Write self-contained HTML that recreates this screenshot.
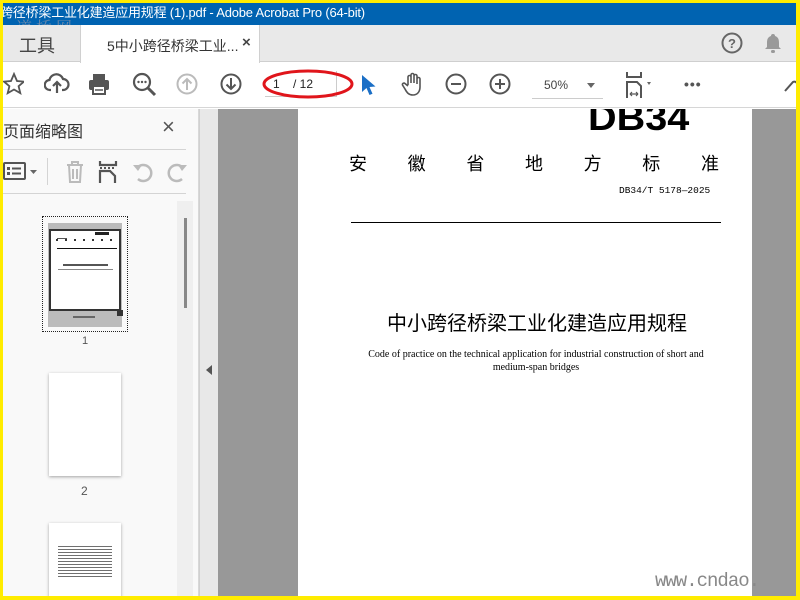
<!DOCTYPE html>
<html><head><meta charset="utf-8">
<style>
*{margin:0;padding:0;box-sizing:border-box}
body{width:800px;height:600px;overflow:hidden;background:#fff;position:relative;font-family:"Liberation Sans","Noto Sans CJK SC",sans-serif}
.a{position:absolute}
.ic{position:absolute}
</style></head><body>
<div class="a" style="left:0;top:0;width:800px;height:600px;background:#fff;overflow:hidden">
 <!-- title bar -->
 <div class="a" style="left:0;top:3px;width:800px;height:22px;background:#0063b1;color:#fff;font-size:13px;letter-spacing:-0.2px;line-height:19px;white-space:nowrap">跨径桥梁工业化建造应用规程 (1).pdf - Adobe Acrobat Pro (64-bit)</div>
 <div class="a" style="left:16px;top:15px;font-size:16px;color:#9a9aa8;letter-spacing:4px;opacity:.7;font-family:'Noto Serif CJK SC',serif">道桥网</div>
 <!-- tab bar -->
 <div class="a" style="left:0;top:25px;width:800px;height:37px;background:#e9e9e9;border-bottom:1px solid #cfcfcf"></div>
 <div class="a" style="left:80px;top:25px;width:180px;height:38px;background:#fff;border-left:1px solid #d0d0d0;border-right:1px solid #d0d0d0"></div>
 <div class="a" style="left:19px;top:32px;font-size:18px;color:#444">工具</div>
 <div class="a" style="left:107px;top:36px;font-size:14px;color:#333">5中小跨径桥梁工业...</div>
 <div class="a" style="left:242px;top:34px;font-size:15px;color:#444;font-weight:bold">×</div>
 <svg class="ic" style="left:721px;top:32px" width="22" height="22"><circle cx="11" cy="11" r="9.5" fill="none" stroke="#666" stroke-width="2"/><text x="11" y="16" font-size="13" font-weight="bold" text-anchor="middle" fill="#666" font-family="Liberation Sans">?</text></svg>
 <svg class="ic" style="left:764px;top:32px" width="18" height="22"><path d="M9 2a2 2 0 0 1 2 2c3 1 4 3 4 7v4l2 2H1l2-2v-4c0-4 1-6 4-7a2 2 0 0 1 2-2z" fill="#999"/><rect x="7" y="18" width="4" height="3" rx="1.5" fill="#999"/></svg>
 <!-- toolbar -->
 <div class="a" style="left:0;top:63px;width:800px;height:45px;background:#fff;border-bottom:1px solid #d6d6d6"></div>
 <svg class="ic" style="left:2px;top:72px" width="22" height="24"><path d="M12 2l3 7 7 .6-5.4 4.6 1.7 7L12 17.5 5.7 21.2l1.7-7L2 9.6 9 9z" fill="none" stroke="#555" stroke-width="1.8"/></svg>
 <svg class="ic" style="left:44px;top:73px" width="26" height="22"><path d="M7 17H6a5 5 0 0 1-.5-10A7 7 0 0 1 19 6a5 5 0 0 1 0 11h-1" fill="none" stroke="#555" stroke-width="2.2"/><path d="M13 20v-10M9 13l4-4 4 4" fill="none" stroke="#555" stroke-width="2.2"/></svg>
 <svg class="ic" style="left:87px;top:72px" width="24" height="24"><rect x="6" y="2" width="12" height="6" fill="#555"/><rect x="2" y="8" width="20" height="10" rx="2" fill="#555"/><rect x="6" y="14" width="12" height="8" fill="#fff" stroke="#555" stroke-width="2"/><line x1="8" y1="18" x2="16" y2="18" stroke="#555" stroke-width="1.5"/></svg>
 <svg class="ic" style="left:132px;top:72px" width="26" height="26"><circle cx="10" cy="10" r="8" fill="none" stroke="#555" stroke-width="2.2"/><path d="M16 16l7 7" stroke="#555" stroke-width="3"/><circle cx="6.5" cy="10" r="1.2" fill="#555"/><circle cx="10" cy="10" r="1.2" fill="#555"/><circle cx="13.5" cy="10" r="1.2" fill="#555"/></svg>
 <svg class="ic" style="left:176px;top:73px" width="22" height="22"><circle cx="11" cy="11" r="9.5" fill="none" stroke="#bbb" stroke-width="2"/><path d="M11 17V6M6.5 10.5L11 6l4.5 4.5" fill="none" stroke="#bbb" stroke-width="2"/></svg>
 <svg class="ic" style="left:220px;top:73px" width="22" height="22"><circle cx="11" cy="11" r="9.5" fill="none" stroke="#555" stroke-width="2"/><path d="M11 5v11M6.5 11.5L11 16l4.5-4.5" fill="none" stroke="#555" stroke-width="2"/></svg>
 <div class="a" style="left:265px;top:71px;width:72px;height:26px;border-right:1px solid #ccc;border-bottom:1px solid #ccc;font-size:12px;color:#222;line-height:26px;padding-left:8px">1 &nbsp;&nbsp;&nbsp;/ 12</div>
 <svg class="ic" style="left:260px;top:65px" width="100" height="38"><ellipse cx="48" cy="19" rx="44" ry="13" fill="none" stroke="#e0151b" stroke-width="3"/></svg>
 <svg class="ic" style="left:359px;top:73px" width="18" height="24"><path d="M3 2l0 17 4.5-4 3 7 3-1.3-3-6.7 6-.5z" fill="#1b6fc6"/></svg>
 <svg class="ic" style="left:401px;top:71px" width="24" height="26"><path d="M7 14V6a1.5 1.5 0 0 1 3 0v6V4a1.5 1.5 0 0 1 3 0v8V5a1.5 1.5 0 0 1 3 0v8V8a1.5 1.5 0 0 1 3 0v8c0 5-3 8-7 8s-6-2-8-6l-2.5-4a1.5 1.5 0 0 1 2.5-1.5L7 15" fill="none" stroke="#555" stroke-width="1.6"/></svg>
 <svg class="ic" style="left:445px;top:73px" width="22" height="22"><circle cx="11" cy="11" r="9.5" fill="none" stroke="#555" stroke-width="2"/><path d="M6 11h10" stroke="#555" stroke-width="2"/></svg>
 <svg class="ic" style="left:489px;top:73px" width="22" height="22"><circle cx="11" cy="11" r="9.5" fill="none" stroke="#555" stroke-width="2"/><path d="M6 11h10M11 6v10" stroke="#555" stroke-width="2"/></svg>
 <div class="a" style="left:532px;top:71px;width:71px;height:28px;border-bottom:1px solid #ccc;font-size:12px;color:#444;line-height:28px;padding-left:12px">50%</div>
 <div class="a" style="left:587px;top:83px;width:0;height:0;border-left:4px solid transparent;border-right:4px solid transparent;border-top:5px solid #666"></div>
 <svg class="ic" style="left:625px;top:71px" width="36" height="28"><path d="M2 1v5h14V1" fill="none" stroke="#555" stroke-width="2"/><path d="M2 27V11h10l4 4v12" fill="none" stroke="#555" stroke-width="2"/><path d="M5 23h8M5 23l2-2M5 23l2 2M13 23l-2-2M13 23l-2 2" stroke="#555" stroke-width="1.2" fill="none"/><path d="M22 11l4 0-2 3z" fill="#666"/></svg>
 <div class="a" style="left:684px;top:76px;font-size:14px;color:#555;letter-spacing:1px;font-weight:bold">•••</div>
 <svg class="ic" style="left:783px;top:75px" width="14" height="20"><path d="M2 16l8-9a3 3 0 0 1 4 4" fill="none" stroke="#555" stroke-width="2"/></svg>
 <!-- sidebar -->
 <div class="a" style="left:0;top:109px;width:199px;height:491px;background:#f9f9f9;border-right:1px solid #d8d8d8"></div>
 <div class="a" style="left:3px;top:118px;font-size:16px;color:#333">页面缩略图</div>
 <div class="a" style="left:162px;top:116px;font-size:22px;color:#555;line-height:22px">×</div>
 <div class="a" style="left:0;top:149px;width:186px;height:1px;background:#d4d4d4"></div>
 <svg class="ic" style="left:3px;top:160px" width="40" height="24"><rect x="1" y="3" width="21" height="16" rx="1" fill="none" stroke="#555" stroke-width="2"/><rect x="4" y="7" width="3" height="3" fill="#555"/><rect x="4" y="12" width="3" height="3" fill="#555"/><path d="M9 8.5h9M9 13.5h9" stroke="#555" stroke-width="2"/><path d="M27 10h7l-3.5 4z" fill="#666"/></svg>
 <div class="a" style="left:47px;top:158px;width:1px;height:27px;background:#d4d4d4"></div>
 <svg class="ic" style="left:64px;top:160px" width="22" height="24"><path d="M3 5h16M8 5V2h6v3M5 5l1 17h10l1-17M9 9v10M13 9v10" fill="none" stroke="#bbb" stroke-width="2"/></svg>
 <svg class="ic" style="left:98px;top:160px" width="22" height="24"><path d="M2 1v4h16V1" fill="none" stroke="#555" stroke-width="2.2"/><path d="M2 8h2M6 8h2M10 8h2M14 8h2" stroke="#555" stroke-width="2"/><path d="M2 23V11h10l5 5v7" fill="none" stroke="#555" stroke-width="2.2"/></svg>
 <svg class="ic" style="left:132px;top:160px" width="24" height="24"><path d="M6 19A8 8 0 1 0 5 8" fill="none" stroke="#bbb" stroke-width="2.5"/><path d="M1 5l5 6 4-6z" fill="#bbb"/></svg>
 <svg class="ic" style="left:164px;top:160px" width="24" height="24"><path d="M18 19A8 8 0 1 1 19 8" fill="none" stroke="#bbb" stroke-width="2.5"/><path d="M23 5l-5 6-4-6z" fill="#bbb"/></svg>
 <div class="a" style="left:0;top:193px;width:186px;height:1px;background:#d4d4d4"></div>
 <div class="a" style="left:177px;top:201px;width:16px;height:399px;background:#efefef"></div>
 <div class="a" style="left:184px;top:218px;width:3px;height:90px;background:#888"></div>
 <!-- thumb 1 -->
 <div class="a" style="left:42px;top:216px;width:86px;height:116px;border:1px dotted #222"></div>
 <div class="a" style="left:48px;top:223px;width:74px;height:104px;background:#bbb"></div>
 <div class="a" style="left:49px;top:229px;width:72px;height:82px;background:#fff;border:2px solid #333"></div>
 <div class="a" style="left:57px;top:238px;width:10px;height:1px;background:#555"></div>
 <div class="a" style="left:95px;top:232px;width:14px;height:3px;background:#222"></div>
 <div class="a" style="left:56px;top:239px;width:60px;height:2px;background:repeating-linear-gradient(90deg,#333 0 2px,transparent 2px 9px)"></div>
 <div class="a" style="left:57px;top:248px;width:60px;height:1px;background:#111"></div>
 <div class="a" style="left:63px;top:264px;width:45px;height:2px;background:#555"></div>
 <div class="a" style="left:58px;top:269px;width:55px;height:1px;background:#888"></div>
 <div class="a" style="left:117px;top:310px;width:6px;height:6px;background:#333"></div>
 <div class="a" style="left:73px;top:316px;width:22px;height:2px;background:#666"></div>
 <div class="a" style="left:82px;top:335px;font-size:11px;color:#555">1</div>
 <!-- thumb 2 -->
 <div class="a" style="left:49px;top:373px;width:72px;height:103px;background:#fff;box-shadow:0 1px 3px rgba(0,0,0,.35)"></div>
 <div class="a" style="left:81px;top:484px;font-size:12px;color:#555">2</div>
 <!-- thumb 3 -->
 <div class="a" style="left:49px;top:523px;width:72px;height:77px;background:#fff;box-shadow:0 1px 3px rgba(0,0,0,.35)"></div>
 <div class="a" style="left:58px;top:546px;width:54px;height:32px;background:repeating-linear-gradient(#333 0 1px,#fff 1px 3px);opacity:.7"></div>
 <!-- divider -->
 <div class="a" style="left:199px;top:109px;width:19px;height:491px;background:#e8e8e8;border-left:1px solid #d0d0d0"></div>
 <div class="a" style="left:206px;top:365px;width:0;height:0;border-top:5px solid transparent;border-bottom:5px solid transparent;border-right:6px solid #555"></div>
 <!-- doc area -->
 <div class="a" style="left:218px;top:109px;width:582px;height:491px;background:#989898"></div>
 <div class="a" style="left:298px;top:109px;width:454px;height:491px;background:#fff;overflow:hidden">
  <div class="a" style="left:290px;top:-9px;font-size:36px;font-weight:bold;color:#000;line-height:36px;font-family:'Liberation Sans',sans-serif;transform:scaleX(1.1);transform-origin:left">DB34</div>
 </div>
 <div class="a" style="left:349px;top:150px;width:370px;font-size:18px;color:#000;display:flex;justify-content:space-between;font-family:'Noto Sans CJK SC',sans-serif"><span>安</span><span>徽</span><span>省</span><span>地</span><span>方</span><span>标</span><span>准</span></div>
 <div class="a" style="left:619px;top:185px;font-size:9.5px;color:#000;font-family:'Liberation Mono',monospace">DB34/T 5178—2025</div>
 <div class="a" style="left:351px;top:222px;width:370px;height:1px;background:#000"></div>
 <div class="a" style="left:310px;top:307px;width:454px;text-align:center;font-size:20px;color:#000;font-family:'Noto Sans CJK SC',sans-serif">中小跨径桥梁工业化建造应用规程</div>
 <div class="a" style="left:354px;top:348px;width:364px;text-align:center;font-size:10px;line-height:13px;color:#000;font-family:'Liberation Serif',serif">Code of practice on the technical application for industrial construction of short and medium-span bridges</div>
 <div class="a" style="left:655px;top:570px;font-size:19px;color:#888;font-family:'Liberation Mono',monospace;letter-spacing:-1px">www.cndao.</div>
</div>
<div class="a" style="left:0;top:0;width:800px;height:3px;background:#ffec00"></div>
<div class="a" style="left:0;top:0;width:3px;height:600px;background:#ffec00"></div>
<div class="a" style="left:796px;top:0;width:4px;height:600px;background:#ffec00"></div>
<div class="a" style="left:0;top:596px;width:800px;height:4px;background:#ffec00"></div>
</body></html>
